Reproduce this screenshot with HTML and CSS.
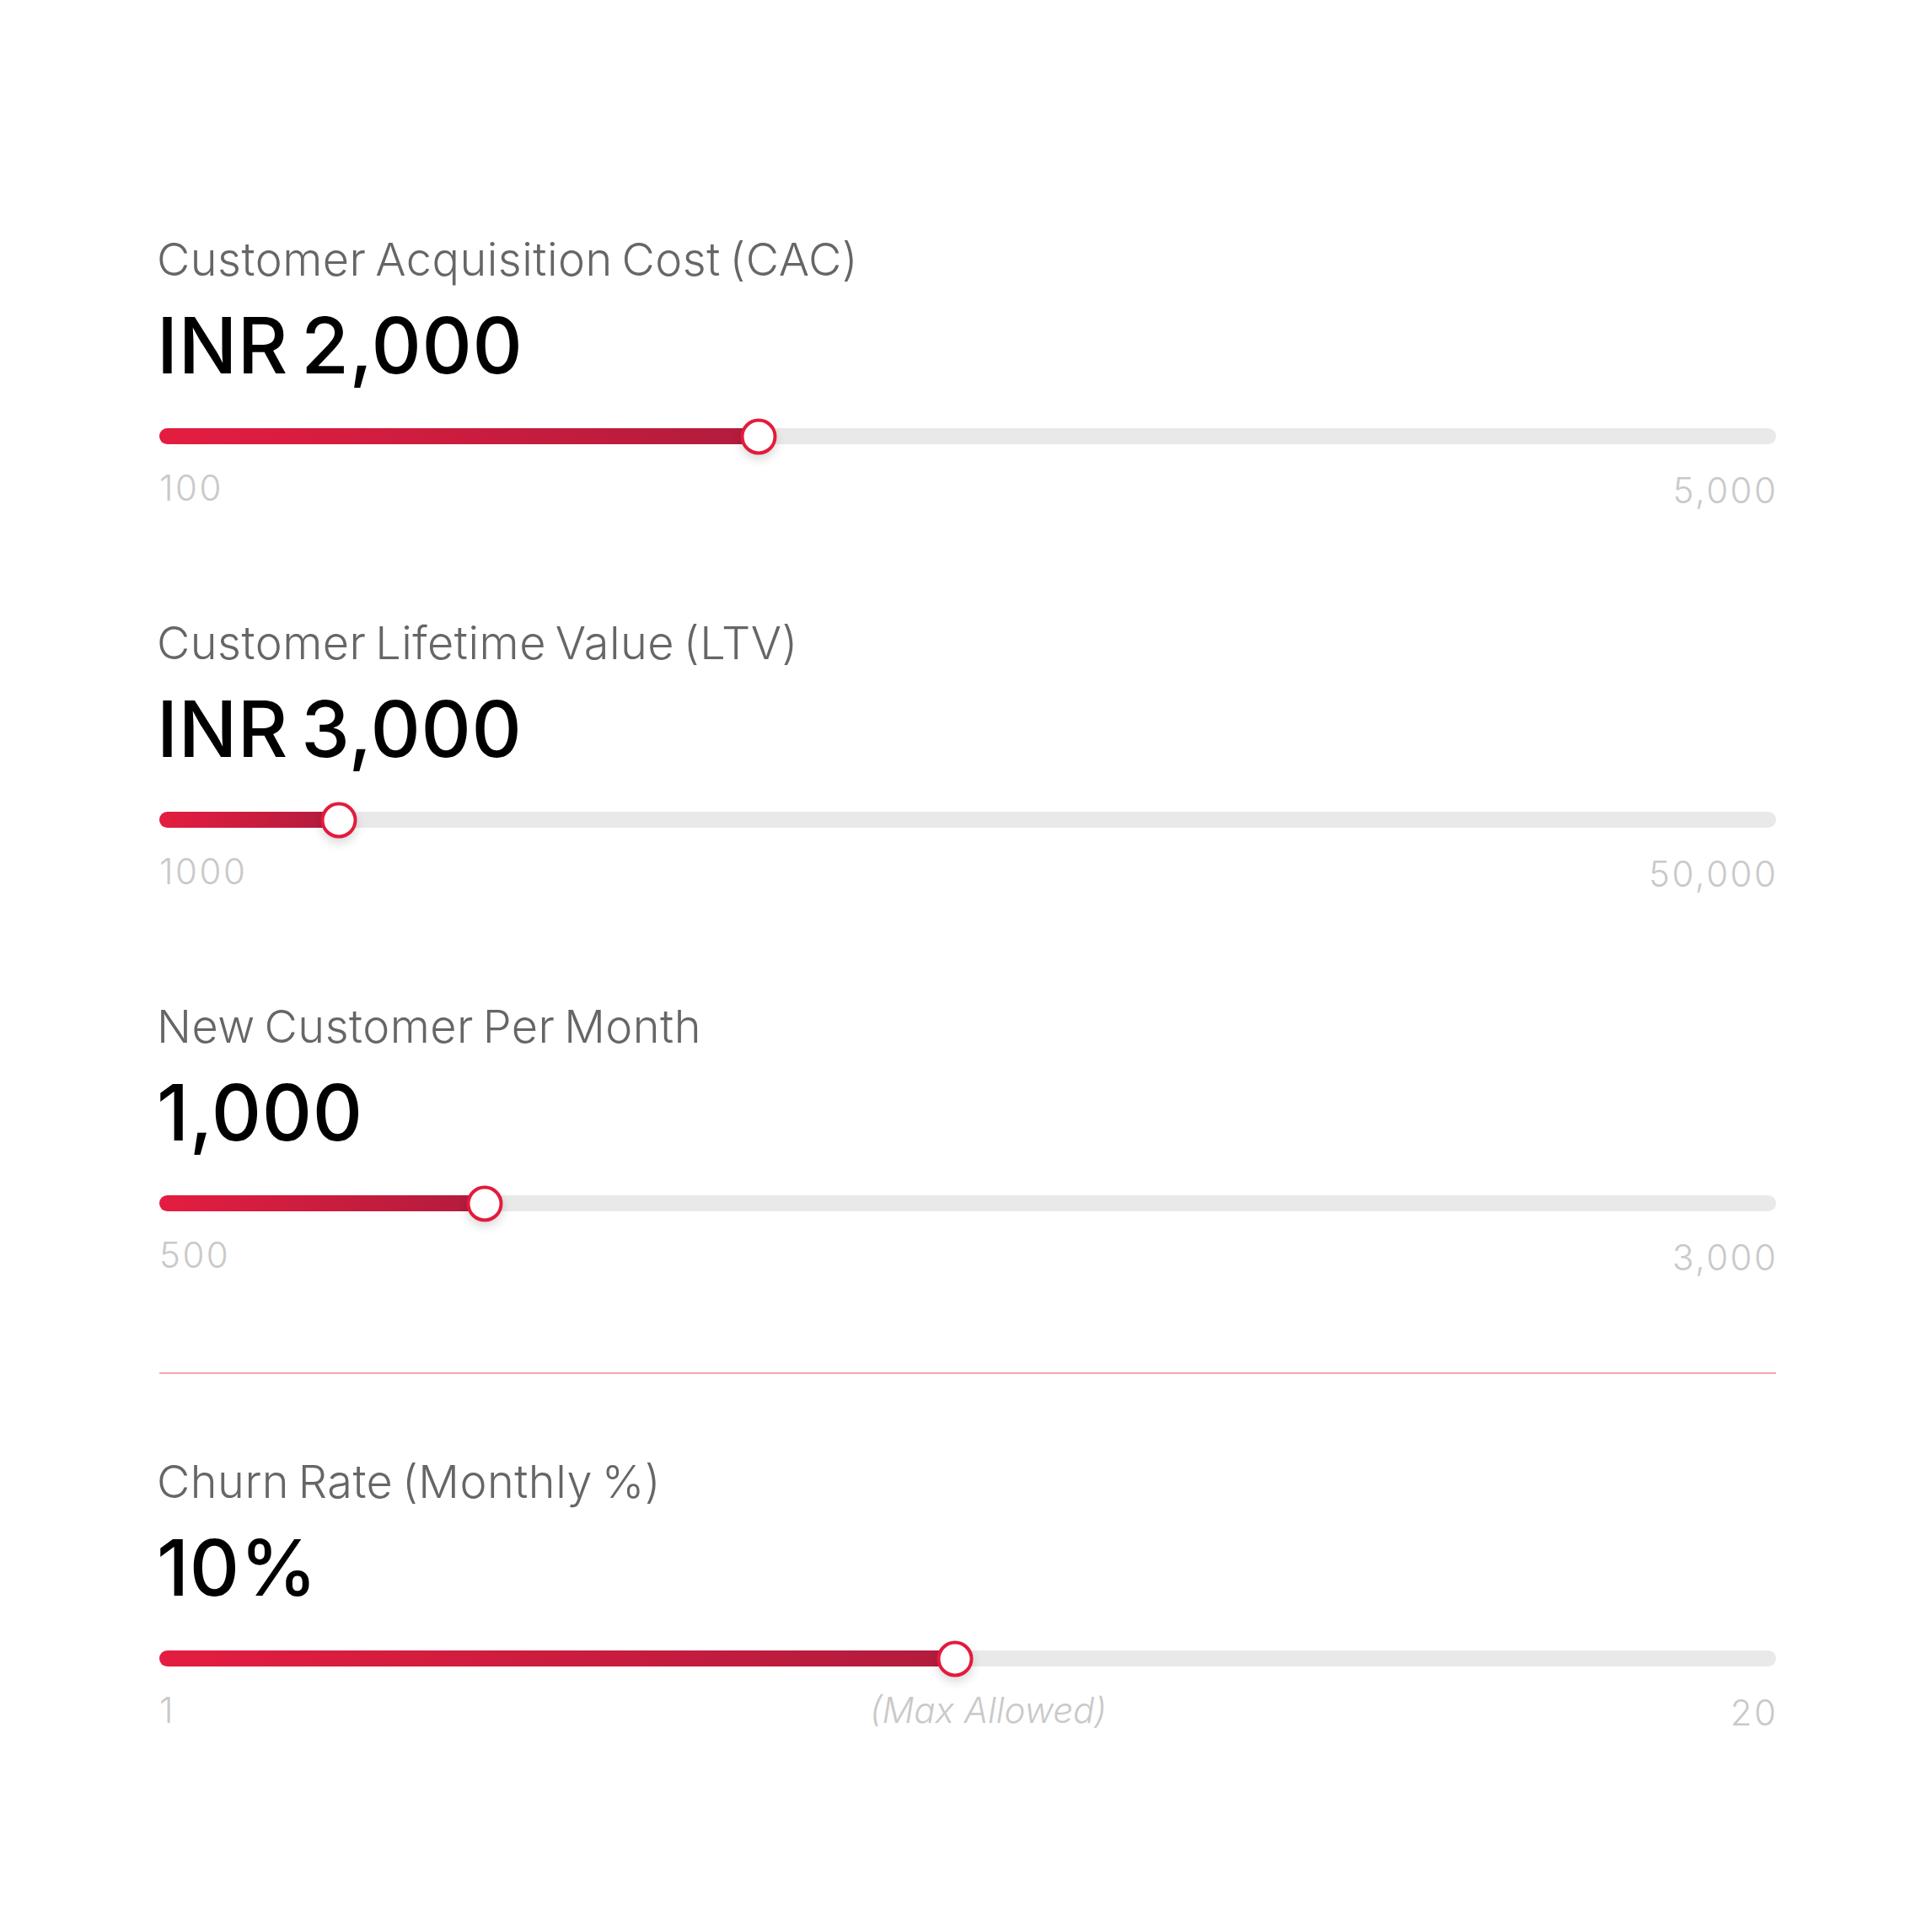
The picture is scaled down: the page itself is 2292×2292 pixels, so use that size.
FILE: index.html
```html
<!DOCTYPE html>
<html lang="en">
<head>
<meta charset="utf-8">
<title>Calculator Sliders</title>
<link rel="stylesheet" href="styles.css">
</head>
<body>
<main class="panel">
  <section class="field">
    <div class="label">Customer Acquisition Cost (CAC)</div>
    <div class="value">INR 2,000</div>
    <div class="slider">
      <div class="fill" style="width: 37.05%"></div>
      <div class="knob" style="left: 37.05%"></div>
    </div>
    <div class="range"><span>100</span><span class="max">5,000</span></div>
  </section>

  <section class="field">
    <div class="label">Customer Lifetime Value (LTV)</div>
    <div class="value">INR 3,000</div>
    <div class="slider">
      <div class="fill" style="width: 11.1%"></div>
      <div class="knob" style="left: 11.1%"></div>
    </div>
    <div class="range"><span>1000</span><span class="max">50,000</span></div>
  </section>

  <section class="field">
    <div class="label">New Customer Per Month</div>
    <div class="value">1,000</div>
    <div class="slider">
      <div class="fill" style="width: 20.1%"></div>
      <div class="knob" style="left: 20.1%"></div>
    </div>
    <div class="range"><span>500</span><span class="max">3,000</span></div>
  </section>

  <hr class="divider">

  <section class="field">
    <div class="label">Churn Rate (Monthly %)</div>
    <div class="value">10%</div>
    <div class="slider">
      <div class="fill" style="width: 49.2%"></div>
      <div class="knob" style="left: 49.2%"></div>
    </div>
    <div class="range"><span>1</span><span class="note">(Max Allowed)</span><span class="max">20</span></div>
  </section>
</main>
</body>
</html>
```

FILE: styles.css
```css
* {
  box-sizing: border-box;
}

html, body {
  margin: 0;
  padding: 0;
  background: #ffffff;
}

body {
  font-family: Inter, "Liberation Sans", sans-serif;
  width: 2292px;
  height: 2292px;
  overflow: hidden;
}

.panel {
  width: 1918px;
  margin-left: 189px;
  padding-top: 276px;
  display: flex;
  flex-direction: column;
}

.field {
  display: flex;
  flex-direction: column;
}

.field + .field {
  margin-top: 127px;
}

.label {
  margin-left: -3px;
  font-size: 54px;
  line-height: 64px;
  font-weight: 300;
  color: #666666;
  white-space: nowrap;
  letter-spacing: 0.5px;
  word-spacing: -5px;
}

.value {
  margin-top: 20px;
  margin-left: -3px;
  font-size: 92px;
  line-height: 100px;
  font-weight: 500;
  color: #000000;
  white-space: nowrap;
  letter-spacing: 0.6px;
  word-spacing: -10px;
}

.slider {
  position: relative;
  margin-top: 48px;
  height: 19px;
  border-radius: 10px;
  background: #e9e9e9;
}

.fill {
  height: 100%;
  border-radius: 10px 0 0 10px;
  background: linear-gradient(90deg, #e41d40 0%, #b21c3d 100%);
}

.knob {
  position: absolute;
  top: 50%;
  width: 43px;
  height: 43px;
  border-radius: 50%;
  border: 4px solid #e31b3c;
  background: #ffffff;
  transform: translate(-50%, -50%);
  box-shadow: 0 6px 12px rgba(0, 0, 0, 0.14);
}

.range {
  margin-top: 27px;
  display: flex;
  justify-content: space-between;
  font-size: 42px;
  line-height: 50px;
  font-weight: 300;
  color: #c9c9c9;
  letter-spacing: 2.5px;
}

.range .max {
  position: relative;
  top: 3px;
  margin-right: -2.5px;
}

.range .note {
  font-style: italic;
  letter-spacing: 0;
  margin-left: 84px;
}

.divider {
  margin: 114px 0 0 0;
  border: 0;
  height: 2px;
  background: #f6a6b4;
}

.divider + .field {
  margin-top: 96px;
}
```
